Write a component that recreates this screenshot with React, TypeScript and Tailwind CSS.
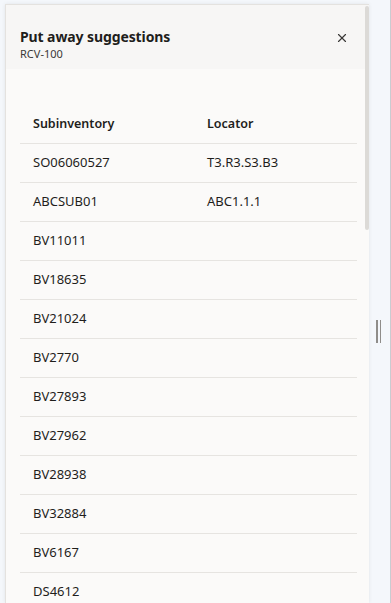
import { X } from "lucide-react"

const rows: [string, string][] = [
    ["SO06060527", "T3.R3.S3.B3"],
    ["ABCSUB01", "ABC1.1.1"],
    ["BV11011", ""],
    ["BV18635", ""],
    ["BV21024", ""],
    ["BV2770", ""],
    ["BV27893", ""],
    ["BV27962", ""],
    ["BV28938", ""],
    ["BV32884", ""],
    ["BV6167", ""],
    ["DS4612", ""],
]

export default function App() {
    return (
        <div className="relative h-[603px] w-[391px] overflow-hidden bg-[#f4f7fb] pl-[5px] pt-[4px] text-[#1f1e1c]" style={{ fontFamily: '"Noto Sans", "Open Sans", sans-serif' }}>
            <div className="relative h-full w-[364px] border-l border-t border-[#e4e2df] bg-[#fbfaf9] shadow-[0_0_4px_rgba(0,0,0,0.08)]">
                <div className="flex h-[64px] items-start justify-between bg-[#f7f6f5] pl-[14px] pr-[20px] pt-[22px]">
                    <div>
                        <h1 className="text-[14px] font-bold leading-[20px] tracking-[-0.1px]">Put away suggestions</h1>
                        <p className="text-[11px] leading-[14px] text-[#3a3937]">RCV-100</p>
                    </div>
                    <button className="mt-[4px] text-[#3a3937]">
                        <X className="h-[14px] w-[14px]" strokeWidth={2} />
                    </button>
                </div>
                <div className="mx-[14px] mt-[36px] w-[337px]">
                    <div className="flex h-[39px] items-center border-b border-[#e6e4e1] text-[12.5px] font-semibold">
                        <div className="w-[174px] px-[13px]">Subinventory</div>
                        <div className="px-[13px]">Locator</div>
                    </div>
                    {rows.map(([sub, loc]) => (
                        <div key={sub} className="flex h-[39px] items-center border-b border-[#e6e4e1] text-[13px]">
                            <div className="w-[174px] px-[13px]">{sub}</div>
                            <div className="px-[13px]">{loc}</div>
                        </div>
                    ))}
                </div>
                <div className="absolute right-0 top-[1px] h-[224px] w-[4px] rounded-sm bg-[#dcdad7]" />
            </div>
            <div className="absolute left-[376px] top-[320px] flex h-[23px] gap-[2px]">
                <div className="w-[1.5px] bg-[#8f8d8a]" />
                <div className="w-[1.5px] bg-[#8f8d8a]" />
            </div>
            <div className="absolute right-0 top-0 h-full w-[1px] bg-[#c9ccd1]" />
        </div>
    )
}
